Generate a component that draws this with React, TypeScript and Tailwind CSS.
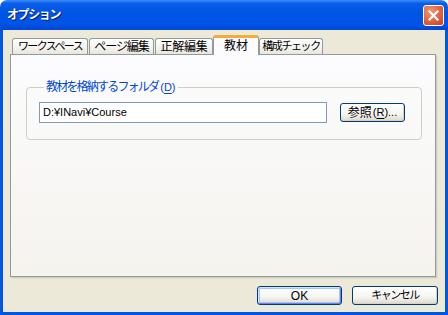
import React from "react";

const TABS = [
  { label: "ワークスペース", w: "w-[76px]", ml: "ml-[2px]", txt: "text-[11px] tracking-[-1.6px]" },
  { label: "ページ編集", w: "w-[65px]", ml: "ml-[1px]", txt: "text-[12px] tracking-[-1.1px]" },
  { label: "正解編集", w: "w-[58px]", ml: "ml-[1px]", txt: "text-[12px] tracking-[-0.2px]" },
  { label: "教材", w: "w-[46px]", ml: "ml-0", txt: "text-[12px]", active: true },
  { label: "構成チェック", w: "w-[64px]", ml: "ml-0", txt: "text-[11px] tracking-[-1.4px]" },
];

function XpButton({ children, primary }: { children: React.ReactNode; primary?: boolean }) {
  return (
    <button
      type="button"
      className={
        "flex h-[19px] w-full items-center justify-center whitespace-nowrap rounded-[3px] border border-[#003c74] bg-[linear-gradient(to_bottom,#ffffff,#f4f4f0_60%,#dcd8cc)] leading-none text-black " +
        (primary
          ? "shadow-[inset_1px_1px_0_#cee7ff,inset_-1px_-1px_0_#6982ee,inset_0_0_0_2px_#a8c4f4]"
          : "shadow-[inset_-1px_-1px_0_#d6d0c5]")
      }
    >
      {children}
    </button>
  );
}

export default function App() {
  return (
    <div className="flex h-[315px] w-[448px] flex-col font-[Liberation_Sans,Noto_Sans_CJK_JP,sans-serif]">
      {/* Title bar */}
      <div className="flex h-[30px] shrink-0 items-center rounded-t-[7px] bg-[linear-gradient(to_bottom,#3d8df5,#0a5de8_12%,#0054e3_45%,#0055e8_80%,#0046d0)] pl-[7px] pr-[4px]">
        <span className="text-[12px] font-bold leading-none tracking-[-1.4px] text-white [text-shadow:1px_1px_0_#0a1c6e]">
          オプション
        </span>
        <div className="ml-auto flex h-[21px] w-[21px] items-center justify-center rounded-[3px] border border-white bg-[radial-gradient(circle_at_35%_30%,#f19a7c,#e1603d_55%,#c6401b)]">
          <svg width="11" height="11" viewBox="0 0 11 11">
            <path d="M1.5 1.5 L9.5 9.5 M9.5 1.5 L1.5 9.5" stroke="#fff" strokeWidth="2.2" strokeLinecap="square" />
          </svg>
        </div>
      </div>

      {/* Body */}
      <div className="flex flex-1 flex-col border-x-[3px] border-b-[3px] border-[#0055e5] bg-[#ece9d8] pl-[7px] pt-[5px]">
        {/* Tabs */}
        <div className="relative z-10 flex h-[19px] items-end">
          {TABS.map((t) =>
            t.active ? (
              <div
                key={t.label}
                className={`${t.w} ${t.ml} ${t.txt} -mb-px flex h-[20px] items-center justify-center whitespace-nowrap rounded-t-[3px] border-x border-t-[3px] border-x-[#919b9c] border-t-[#f5ab35] bg-[#fcfcfe] pb-[2px] leading-none text-black`}
              >
                {t.label}
              </div>
            ) : (
              <div
                key={t.label}
                className={`${t.w} ${t.ml} ${t.txt} flex h-[16px] items-center justify-center whitespace-nowrap rounded-t-[3px] border-x border-t border-[#919b9c] bg-[linear-gradient(to_bottom,#ffffff,#f3f2ed_60%,#e8e6dc)] leading-none text-black`}
              >
                {t.label}
              </div>
            )
          )}
        </div>

        {/* Panel */}
        <div className="h-[223px] w-[426px] border border-[#919b9c] bg-[linear-gradient(to_bottom,#fcfcfe,#f4f3ee)] px-[15px] pt-[25px] shadow-[1px_1px_0_#d0cebf,2px_2px_0_#e2dfd0]">
          <fieldset className="h-[60px] w-[396px] rounded-[4px] border border-[#d0d0bf] pl-[12px]">
            <legend className="ml-[5px] px-[2px] text-[12px] leading-[14px] text-[#0046d5]">
              <span className="tracking-[-1.8px]">教材を格納するフォルダ</span>
              <span className="ml-[2px] text-[11px]">
                (<span className="underline underline-offset-2">D</span>)
              </span>
            </legend>
            <div className="mt-[8px] flex items-center">
              <div className="flex h-[21px] w-[288px] items-center border border-[#7f9db9] bg-white pl-[3px] text-[11px] leading-none text-black">
                D:¥INavi¥Course
              </div>
              <div className="ml-[13px] w-[65px] text-[12px]">
                <XpButton>
                  参照
                  <span className="ml-[1px] text-[11px]">
                    (<span className="underline underline-offset-2">R</span>)...
                  </span>
                </XpButton>
              </div>
            </div>
          </fieldset>
        </div>

        {/* Footer buttons */}
        <div className="mt-[9px] flex justify-end gap-[10px] pr-[7px]">
          <div className="w-[85px] text-[12px]">
            <XpButton primary>OK</XpButton>
          </div>
          <div className="w-[86px] text-[11px] tracking-[-1.5px]">
            <XpButton>キャンセル</XpButton>
          </div>
        </div>
      </div>
    </div>
  );
}
